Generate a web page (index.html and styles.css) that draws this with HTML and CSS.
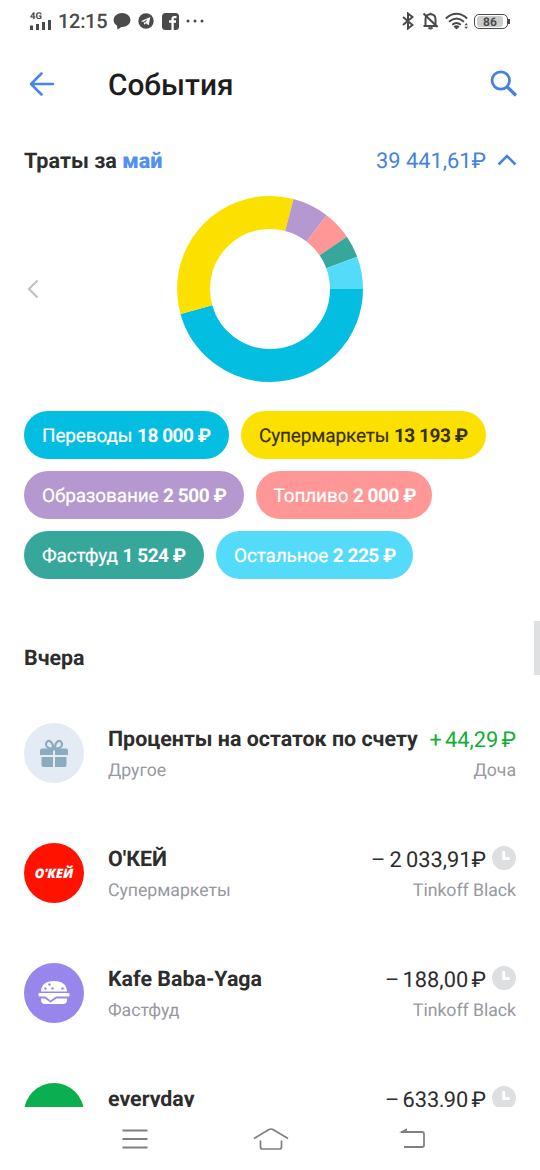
FILE: index.html
```html
<!DOCTYPE html>
<html lang="ru">
<head>
<meta charset="utf-8">
<title>События</title>
<link rel="stylesheet" href="styles.css">
</head>
<body>
<div class="screen">
  <div class="status">
    <div class="network"><span class="gen">4G</span>
      <svg width="22" height="10" viewBox="0 0 22 10" fill="#4a4a4a"><rect x="0" y="5.500" width="3" height="4.500"/><rect x="6" y="4" width="3" height="6"/><rect x="12" y="2" width="3" height="8"/><rect x="18" y="0" width="3" height="10"/></svg>
    </div>
    <span class="time">12:15</span>
    <svg class="i-chat" width="18" height="18" viewBox="0 0 18 18" fill="#4a4a4a"><ellipse cx="9" cy="8" rx="8.500" ry="7"/><path d="M4 13l.4 4.500 5-3z"/></svg>
    <svg class="i-tg" width="16" height="16" viewBox="0 0 16 16"><circle cx="8" cy="8" r="7.700" fill="#4a4a4a"/><path d="M2.700 8.200L12.300 4l-1.600 8.200-3-2-1.600 1.600-.4-3z" fill="#fff"/><path d="M5.700 8.800l4-2.700-2.900 3.700z" fill="#4a4a4a"/></svg>
    <svg class="i-fb" width="17" height="17" viewBox="0 0 17 17"><rect width="17" height="17" rx="3.500" fill="#4a4a4a"/><path d="M14.500 4.200h-2.200q-1.700 0-1.700 1.800V17M7 8.500h7" fill="none" stroke="#fff" stroke-width="2.300"/></svg>
    <svg class="i-dots" width="18" height="4" viewBox="0 0 18 4" fill="#4a4a4a"><circle cx="2" cy="2" r="1.500"/><circle cx="9" cy="2" r="1.500"/><circle cx="16" cy="2" r="1.500"/></svg>
    <div class="status-right">
      <svg width="12" height="18" viewBox="0 0 12 18" fill="none" stroke="#4a4a4a" stroke-width="2"><path d="M1 5l9.500 8L6 16.500v-15L10.500 5 1 13"/></svg>
      <svg class="i-bell" width="17" height="18" viewBox="0 0 17 18" fill="none" stroke="#4a4a4a" stroke-width="2"><path d="M1.500 14h14M3.500 13.500V7.500Q3.500 2.300 8.500 2.300T13.500 7.500v6M6.500 15.500q2 2 4 0M8.500 2V.8"/><path d="M1.500 1.500l14 13.500"/></svg>
      <svg class="i-wifi" width="24" height="18" viewBox="0 0 24 18" fill="none" stroke="#4a4a4a" stroke-width="2"><path d="M.8 6.500q10.700-9.500 21.400 0M4 9.800q7.500-6.500 15 0M7.200 12.800q4.300-3.600 8.600 0"/><path d="M8.400 14.500q3.100-2.500 6.200 0l-3.100 3z" fill="#4a4a4a" stroke="none"/><path d="M19.500 13.200l1.700-2.200 1.700 2.200zM19.500 14.800l1.700 2.200 1.700-2.200z" fill="#4a4a4a" stroke="none"/></svg>
      <div class="battery"><span>86</span></div>
    </div>
  </div>

  <header class="header">
    <svg width="26" height="24" viewBox="0 0 26 24" fill="none" stroke="#4786e5" stroke-width="2.500" stroke-linecap="round" stroke-linejoin="round"><path d="M24 12H3M12.500 1.500L2 12l10.500 10.500"/></svg>
    <h1>События</h1>
    <svg class="i-search" width="28" height="28" viewBox="0 0 28 28" fill="none" stroke="#4583dc"><circle cx="10.800" cy="10.500" r="8.700" stroke-width="2.800"/><path d="M17.300 17L26 25.500" stroke-width="3.200"/></svg>
  </header>

  <div class="summary">
    <span class="spent">Траты за <b>май</b></span>
    <span class="total">39 441,61₽</span>
    <svg width="20" height="12" viewBox="0 0 20 12" fill="none" stroke="#4583dc" stroke-width="2.600"><path d="M1.500 10.500L10 2l8.500 8.500"/></svg>
  </div>

  <div class="chart">
    <svg class="i-prev" width="12" height="20" viewBox="0 0 12 20" fill="none" stroke="#c3c3c3" stroke-width="2.300"><path d="M10.500 1.500L2 10l8.500 8.500"/></svg>
    <svg width="186" height="186" viewBox="0 0 186 186" fill="none" stroke-width="33">
      <circle cx="93" cy="93" r="76.500" pathLength="39442" stroke="#03bee1" stroke-dasharray="18000 39442"/>
      <circle cx="93" cy="93" r="76.500" pathLength="39442" stroke="#fce100" stroke-dasharray="13193 39442" stroke-dashoffset="-18000"/>
      <circle cx="93" cy="93" r="76.500" pathLength="39442" stroke="#b498cf" stroke-dasharray="2500 39442" stroke-dashoffset="-31193"/>
      <circle cx="93" cy="93" r="76.500" pathLength="39442" stroke="#ff9796" stroke-dasharray="2000 39442" stroke-dashoffset="-33693"/>
      <circle cx="93" cy="93" r="76.500" pathLength="39442" stroke="#38a79b" stroke-dasharray="1524 39442" stroke-dashoffset="-35693"/>
      <circle cx="93" cy="93" r="76.500" pathLength="39442" stroke="#55dbfa" stroke-dasharray="2225 39442" stroke-dashoffset="-37217"/>
    </svg>
  </div>

  <div class="pills">
    <div class="pill transfers">Переводы <b>18 000 ₽</b></div>
    <div class="pill markets">Супермаркеты <b>13 193 ₽</b></div>
    <div class="pill education">Образование <b>2 500 ₽</b></div>
    <div class="pill fuel">Топливо <b>2 000 ₽</b></div>
    <div class="pill fastfood">Фастфуд <b>1 524 ₽</b></div>
    <div class="pill other">Остальное <b>2 225 ₽</b></div>
  </div>

  <main class="list">
    <h2>Вчера</h2>
    <div class="row">
      <div class="avatar gift"><svg width="28" height="29" viewBox="0 0 28 29" fill="#8cabbe"><path d="M2 9.500h24q2 0 2 2V16H15v-4.500h-2V16H0v-4.500q0-2 2-2zM1.500 18H13v10H3.500q-2 0-2-2zM15 18h11.500v8q0 2-2 2H15z"/><path d="M13 9.500Q5.500 9.500 6 4.800 7.300.2 11 3q2.200 2 2 6.500zM15 9.500q7.500 0 7-4.700Q20.700.2 17 3q-2.200 2-2 6.500z" fill="none" stroke="#8cabbe" stroke-width="2.200"/></svg></div>
      <div class="info"><div class="name">Проценты на остаток по счету</div><div class="sub">Другое</div></div>
      <div class="money"><div class="amount plus">+ 44,29 ₽</div><div class="sub">Доча</div></div>
    </div>
    <div class="row">
      <div class="avatar okey"><span>О'КЕЙ</span></div>
      <div class="info"><div class="name">О'КЕЙ</div><div class="sub">Супермаркеты</div></div>
      <div class="money"><div class="amount">– 2 033,91₽<i class="clock"><svg width="24" height="24" viewBox="0 0 24 24"><circle cx="12" cy="12" r="12" fill="#dedfe1"/><path d="M11.700 5v7.700h6" fill="none" stroke="#fff" stroke-width="2.800"/></svg></i></div><div class="sub">Tinkoff Black</div></div>
    </div>
    <div class="row">
      <div class="avatar kafe"><svg width="32" height="24" viewBox="0 0 32 24" fill="#fff"><path d="M3 10.500Q3.500 0 16 0t13 10.500zM1.500 12h29q1.200 0 1.200 1.700T30.500 15.500H18L12.500 19.500 7.500 15.500h-6Q.3 15.500.3 13.700T1.500 12zM3 17.500h4l5.500 4 6-4H29v1.500q0 4-4 4H7q-4 0-4-4z"/><g fill="#9886ec"><circle cx="7.500" cy="7.500" r="1.200"/><circle cx="11.500" cy="3.500" r="1.200"/><circle cx="14.500" cy="7.500" r="1.200"/><circle cx="24.500" cy="7.500" r="1.200"/></g></svg></div>
      <div class="info"><div class="name">Kafe Baba-Yaga</div><div class="sub">Фастфуд</div></div>
      <div class="money"><div class="amount tight">– 188,00 ₽<i class="clock"><svg width="24" height="24" viewBox="0 0 24 24"><circle cx="12" cy="12" r="12" fill="#dedfe1"/><path d="M11.700 5v7.700h6" fill="none" stroke="#fff" stroke-width="2.800"/></svg></i></div><div class="sub">Tinkoff Black</div></div>
    </div>
    <div class="row">
      <div class="avatar everyday"></div>
      <div class="info"><div class="name">everyday</div></div>
      <div class="money"><div class="amount tight">– 633,90 ₽<i class="clock"><svg width="24" height="24" viewBox="0 0 24 24"><circle cx="12" cy="12" r="12" fill="#dedfe1"/><path d="M11.700 5v7.700h6" fill="none" stroke="#fff" stroke-width="2.800"/></svg></i></div></div>
    </div>
    <div class="scrollbar"></div>
  </main>

  <nav class="nav">
    <svg width="26" height="20" viewBox="0 0 26 20" stroke="#808080" stroke-width="1.800"><path d="M.5 1.500h25M.5 10h25M.5 18.500h25"/></svg>
    <svg width="36" height="24" viewBox="0 0 36 24" fill="none" stroke="#808080" stroke-width="1.700"><path d="M1 11.500L16 2.500q2-1 4 0l15 9M7.500 13.500V20q0 2 2 2h17q2 0 2-2v-6.500"/></svg>
    <svg width="27" height="22" viewBox="0 0 27 22" fill="none" stroke="#808080" stroke-width="1.800"><path d="M2 4h21q2 0 2 2v11q0 2-2 2H5"/><path d="M0 4.500L8 .3v4.200z" fill="#808080" stroke="none"/></svg>
  </nav>
</div>
</body>
</html>
```
FILE: styles.css
```css
* { box-sizing: border-box; }
body { margin: 0; background: #fff; font-family: Roboto, "Noto Sans", sans-serif; color: #2d2d2d; text-rendering: geometricPrecision; }
svg { display: block; flex: none; }
h1, h2 { margin: 0; }
.screen { width: 540px; height: 1170px; overflow: hidden; display: flex; flex-direction: column; }

.status { height: 42px; display: flex; align-items: center; padding-left: 30px; color: #4a4a4a; }
.network { width: 22px; height: 17px; display: flex; flex-direction: column; justify-content: space-between; }
.gen { font-size: 9.5px; line-height: 7px; font-weight: 700; }
.time { font-size: 20px; font-weight: 500; width: 48px; margin-left: 6px; letter-spacing: -0.3px; white-space: nowrap; }
.i-chat { margin-left: 7px; }
.i-tg { margin-left: 7px; }
.i-fb { margin-left: 8px; }
.i-dots { margin-left: 7px; }
.status-right { margin-left: auto; display: flex; align-items: center; padding-right: 32px; }
.i-bell { margin-left: 8px; }
.i-wifi { margin-left: 6px; }
.battery { position: relative; margin-left: 5px; width: 34px; height: 15px; border: 1.500px solid #4a4a4a; border-radius: 5px; padding: 1px; }
.battery span { display: block; width: 26px; height: 11px; margin-left: 1px; background: #ccc; border-radius: 3px; font-size: 12px; line-height: 12px; font-weight: 700; text-align: center; }
.battery::after { content: ""; position: absolute; right: -3px; top: 4px; width: 2px; height: 5px; background: #4a4a4a; }

.header { height: 84px; display: flex; align-items: center; padding: 0 22px 0 29px; }
.header h1 { margin-left: 53px; font-size: 29.8px; font-weight: 500; line-height: 36px; padding-top: 4px; color: #1d1d1d; }
.i-search { margin-left: auto; }

.summary { height: 68px; display: flex; align-items: center; padding: 0 23px 0 24px; }
.spent { font-size: 21.6px; font-weight: 700; padding-top: 2px; }
.spent b { color: #5390f0; }
.total { margin-left: auto; margin-right: 11px; font-size: 21.8px; color: #4583dc; padding-top: 2px; }

.chart { height: 191px; display: flex; align-items: center; padding: 0 0 1px 27px; }
.chart > :last-child { margin-left: 138px; }

.pills { display: flex; flex-wrap: wrap; align-content: flex-start; gap: 12px; padding: 26px 30px 0 24px; height: 194px; }
.pill { height: 48px; border-radius: 24px; padding: 0 18px; font-size: 19px; line-height: 49px; letter-spacing: -0.15px; color: #fff; white-space: nowrap; -webkit-text-stroke: 0.2px; }
.pill b { font-weight: 700; letter-spacing: -0.45px; word-spacing: 0; -webkit-text-stroke: 0; }
.transfers { background: #03bee1; width: 205px; }
.markets { background: #fce100; color: #39300f; width: 245px; }
.education { background: #b498cf; width: 219.5px; }
.fuel { background: #ff9796; width: 176px; }
.fastfood { background: #38a79b; width: 180px; }
.other { background: #55dbfa; width: 197px; }

.list { position: relative; height: 528px; overflow: hidden; padding: 0 24px; }
.list h2 { height: 144px; padding-top: 66px; font-size: 21.4px; line-height: 28px; font-weight: 700; }
.row { height: 120px; display: flex; align-items: flex-start; }
.avatar { width: 60px; height: 60px; border-radius: 50%; display: flex; align-items: center; justify-content: center; flex: none; }
.gift { background: #e5ebf5; }
.okey { background: #ff1200; color: #fff; }
.okey span { font: italic 900 13px/16px "Open Sans", Roboto, sans-serif; }
.kafe { background: #9886ec; }
.everyday { background: #0bae50; }
.info { margin-left: 24px; white-space: nowrap; }
.name { font-size: 21.4px; line-height: 34px; height: 33px; font-weight: 700; }
.sub { font-size: 17.7px; line-height: 30px; color: #97999f; letter-spacing: -0.03px; }
.money { margin-left: auto; text-align: right; white-space: nowrap; }
.amount { font-size: 21.8px; line-height: 35px; height: 33px; display: flex; justify-content: flex-end; word-spacing: -1.2px; }
.tight { word-spacing: -2px; }
.plus { color: #13ae35; word-spacing: -2.2px; }
.clock { margin-left: 6px; padding-top: 3px; }
.scrollbar { position: absolute; right: 0; top: 42px; width: 6px; height: 54px; background: #dfe0e1; }

.nav { height: 63px; display: flex; align-items: center; padding-left: 122px; }
.nav svg + svg { margin-left: 105px; }
.nav svg:last-child { margin-left: 110px; }
```
